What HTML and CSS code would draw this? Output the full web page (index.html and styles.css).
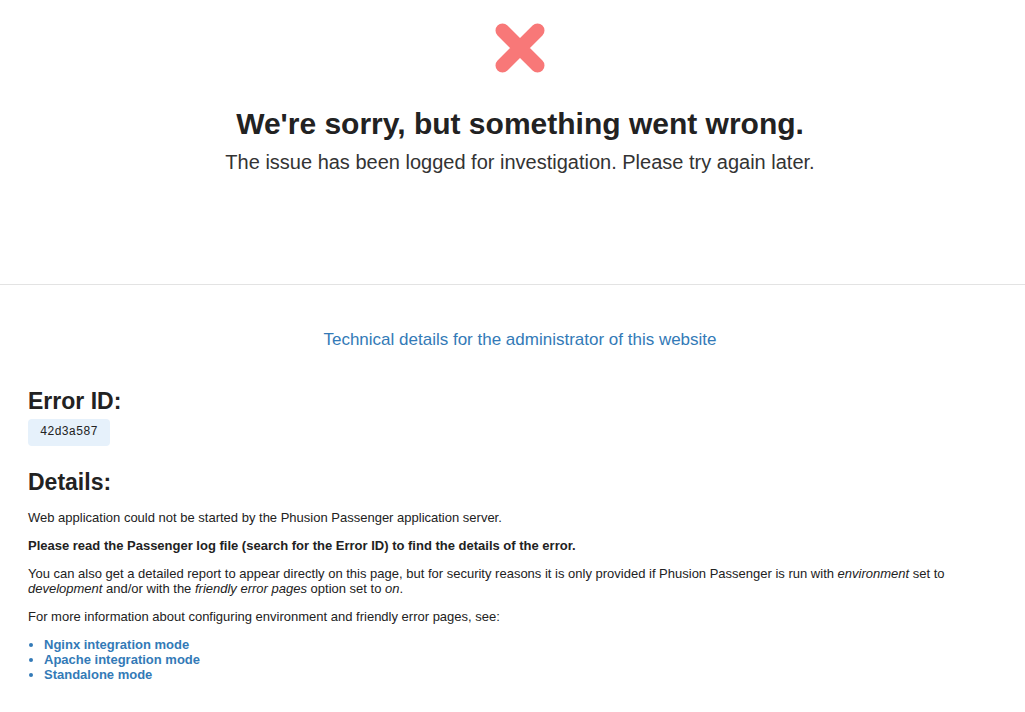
FILE: index.html
```
<!DOCTYPE html>
<html lang="en">
<head>
    <meta charset="UTF-8">
    <meta name="viewport" content="width=device-width, initial-scale=1.0">
    <title>We're sorry, but something went wrong</title>
    <link rel="stylesheet" href="styles.css">
</head>
<body>

<!-- Message for visitors -->
<section class="public">
    <div class="container">
        <svg class="error-icon" width="50" height="50" viewBox="0 0 50 50" aria-hidden="true">
            <path d="M7.5 7.5 L42.5 42.5 M42.5 7.5 L7.5 42.5" stroke="#f87878" stroke-width="14" stroke-linecap="round"/>
        </svg>
        <h1>We're sorry, but something went wrong.</h1>
        <p class="lead">The issue has been logged for investigation. Please try again later.</p>
    </div>
</section>

<hr class="divider">

<!-- Details for the admin -->
<section class="admin">
    <div class="container">
        <p class="admin-title"><a href="#">Technical details for the administrator of this website</a></p>

        <h2>Error ID:</h2>
        <code class="error-id">42d3a587</code>

        <h2 class="details-title">Details:</h2>
        <p>Web application could not be started by the Phusion Passenger application server.</p>
        <p><strong>Please read the Passenger log file (search for the Error ID) to find the details of the error.</strong></p>
        <p>You can also get a detailed report to appear directly on this page, but for security reasons it is only provided if Phusion Passenger is run with <em>environment</em> set to <em>development</em> and/or with the <em>friendly error pages</em> option set to <em>on</em>.</p>
        <p>For more information about configuring environment and friendly error pages, see:</p>
        <ul class="links">
            <li><a href="#">Nginx integration mode</a></li>
            <li><a href="#">Apache integration mode</a></li>
            <li><a href="#">Standalone mode</a></li>
        </ul>
    </div>
</section>

</body>
</html>
```

FILE: styles.css
```
/* Global styling */
body {
    font-family: 'Liberation Sans', Arial, sans-serif;
    font-size: 13px;
    line-height: 15px;
    color: #222222;
    background-color: #ffffff;
    margin: 0;
    padding: 0;
}

a {
    color: #337ab7;
    text-decoration: none;
}

.container {
    padding: 0 13px 0 28px;
}

/* Public part */
.public {
    text-align: center;
    padding-top: 23px;
    height: 261px;
}

.error-icon {
    display: block;
    margin: 0 auto;
}

h1 {
    font-size: 30px;
    line-height: 36px;
    margin: 33px 0 7px;
    color: #222222;
}

.lead {
    font-size: 20px;
    line-height: 26px;
    margin: 0;
    color: #333333;
}

.divider {
    border: none;
    border-top: 1px solid #e3e3e3;
    margin: 0;
}

/* Admin part */
.admin-title {
    text-align: center;
    font-size: 17px;
    line-height: 22px;
    margin: 44px 0 37px;
}

h2 {
    font-size: 23px;
    line-height: 26px;
    margin: 0 0 5px;
    color: #222222;
}

.details-title {
    margin-bottom: 15px;
}

.error-id {
    display: inline-block;
    font-family: 'Liberation Mono', monospace;
    font-size: 12px;
    line-height: 15px;
    padding: 6px 12px;
    background-color: #e6f1fb;
    border-radius: 4px;
    margin-bottom: 23px;
}

p {
    margin: 0 0 13px;
}

.links {
    margin: 0;
    padding-left: 16px;
    color: #337ab7;
}

.links a {
    font-weight: bold;
}

/* Responsive design */
@media screen and (max-width: 600px) {
    h1 {
        font-size: 24px;
    }
}
```
